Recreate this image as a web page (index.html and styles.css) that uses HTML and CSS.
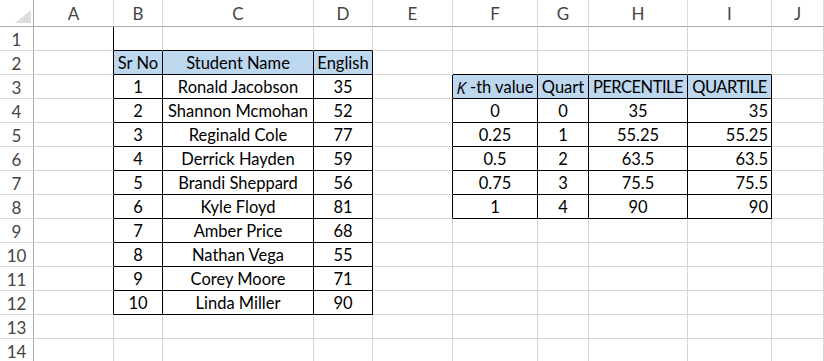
FILE: index.html
```html
<!DOCTYPE html>
<html>
<head>
<meta charset="utf-8">
<link rel="stylesheet" href="styles.css">
</head>
<body>
<div class="sheet">
  <!-- header row -->
  <div class="c corner"><svg width="16" height="13" viewBox="0 0 16 13"><polygon points="16,0 16,13 0,13" fill="#dcdcdc"/></svg></div>
  <div class="c ch">A</div><div class="c ch">B</div><div class="c ch">C</div><div class="c ch">D</div><div class="c ch">E</div><div class="c ch">F</div><div class="c ch">G</div><div class="c ch">H</div><div class="c ch">I</div><div class="c ch">J</div>
  <!-- row 1 -->
  <div class="c rh">1</div><div class="c tl"></div><div class="c tt"></div><div class="c tt"></div><div class="c tt"></div><div class="c"></div><div class="c"></div><div class="c"></div><div class="c"></div><div class="c"></div><div class="c"></div>
  <!-- row 2 -->
  <div class="c rh">2</div><div class="c tl"></div><div class="c t hd">Sr No</div><div class="c t hd">Student Name</div><div class="c t hd">English</div><div class="c"></div><div class="c tt"></div><div class="c tt"></div><div class="c tt"></div><div class="c tt"></div><div class="c"></div>
  <!-- row 3 -->
  <div class="c rh">3</div><div class="c tl"></div><div class="c t">1</div><div class="c t">Ronald Jacobson</div><div class="c t">35</div><div class="c tl"></div><div class="c t hd"><i class="k">K</i>&nbsp;-th value</div><div class="c t hd">Quart</div><div class="c t hd caps">PERCENTILE</div><div class="c t hd caps">QUARTILE</div><div class="c"></div>
  <!-- row 4 -->
  <div class="c rh">4</div><div class="c tl"></div><div class="c t">2</div><div class="c t">Shannon Mcmohan</div><div class="c t">52</div><div class="c tl"></div><div class="c t">0</div><div class="c t">0</div><div class="c t">35</div><div class="c t r">35</div><div class="c"></div>
  <!-- row 5 -->
  <div class="c rh">5</div><div class="c tl"></div><div class="c t">3</div><div class="c t">Reginald Cole</div><div class="c t">77</div><div class="c tl"></div><div class="c t">0.25</div><div class="c t">1</div><div class="c t">55.25</div><div class="c t r">55.25</div><div class="c"></div>
  <!-- row 6 -->
  <div class="c rh">6</div><div class="c tl"></div><div class="c t">4</div><div class="c t">Derrick Hayden</div><div class="c t">59</div><div class="c tl"></div><div class="c t">0.5</div><div class="c t">2</div><div class="c t">63.5</div><div class="c t r">63.5</div><div class="c"></div>
  <!-- row 7 -->
  <div class="c rh">7</div><div class="c tl"></div><div class="c t">5</div><div class="c t">Brandi Sheppard</div><div class="c t">56</div><div class="c tl"></div><div class="c t">0.75</div><div class="c t">3</div><div class="c t">75.5</div><div class="c t r">75.5</div><div class="c"></div>
  <!-- row 8 -->
  <div class="c rh">8</div><div class="c tl"></div><div class="c t">6</div><div class="c t">Kyle Floyd</div><div class="c t">81</div><div class="c tl"></div><div class="c t">1</div><div class="c t">4</div><div class="c t">90</div><div class="c t r">90</div><div class="c"></div>
  <!-- row 9 -->
  <div class="c rh">9</div><div class="c tl"></div><div class="c t">7</div><div class="c t">Amber Price</div><div class="c t">68</div><div class="c"></div><div class="c"></div><div class="c"></div><div class="c"></div><div class="c"></div><div class="c"></div>
  <!-- row 10 -->
  <div class="c rh">10</div><div class="c tl"></div><div class="c t">8</div><div class="c t">Nathan Vega</div><div class="c t">55</div><div class="c"></div><div class="c"></div><div class="c"></div><div class="c"></div><div class="c"></div><div class="c"></div>
  <!-- row 11 -->
  <div class="c rh">11</div><div class="c tl"></div><div class="c t">9</div><div class="c t">Corey Moore</div><div class="c t">71</div><div class="c"></div><div class="c"></div><div class="c"></div><div class="c"></div><div class="c"></div><div class="c"></div>
  <!-- row 12 -->
  <div class="c rh">12</div><div class="c tl"></div><div class="c t">10</div><div class="c t">Linda Miller</div><div class="c t">90</div><div class="c"></div><div class="c"></div><div class="c"></div><div class="c"></div><div class="c"></div><div class="c"></div>
  <!-- row 13 -->
  <div class="c rh">13</div><div class="c"></div><div class="c"></div><div class="c"></div><div class="c"></div><div class="c"></div><div class="c"></div><div class="c"></div><div class="c"></div><div class="c"></div><div class="c"></div>
  <!-- row 14 -->
  <div class="c rh">14</div><div class="c"></div><div class="c"></div><div class="c"></div><div class="c"></div><div class="c"></div><div class="c"></div><div class="c"></div><div class="c"></div><div class="c"></div><div class="c"></div>
</div>
</body>
</html>
```

FILE: styles.css
```css
html, body {
  margin: 0;
  padding: 0;
  background: #ffffff;
  overflow: hidden;
}
.sheet {
  display: grid;
  grid-template-columns: 34px 80px 49px 151px 59px 80px 85px 51px 99px 84px 1fr;
  grid-template-rows: 27px repeat(14, 24px);
  width: 824px;
  font-family: Lato, "Open Sans", sans-serif;
  font-size: 16.5px;
  color: #000;
}
.c {
  box-sizing: border-box;
  border-right: 1px solid #d4d4d4;
  border-bottom: 1px solid #d4d4d4;
  display: flex;
  align-items: center;
  justify-content: center;
  white-space: nowrap;
  overflow: hidden;
  padding-top: 1px;
}
.corner {
  border-right-color: #ababab;
  border-bottom-color: #ababab;
  align-items: flex-end;
  justify-content: flex-end;
  padding: 0 2px 3px 0;
}
.ch {
  color: #444;
  font-size: 17px;
  border-bottom-color: #ababab;
  border-right-color: #dadada;
}
.rh {
  color: #444;
  font-size: 17px;
  border-right-color: #ababab;
  border-bottom-color: #dadada;
}
.t {
  border-right-color: #000;
  border-bottom-color: #000;
}
.tl {
  border-right-color: #000;
}
.tt {
  border-bottom-color: #000;
}
.hd {
  background: #bdd7ee;
}
.caps {
  letter-spacing: -0.5px;
}
.k {
  font-style: italic;
  font-family: "Open Sans", sans-serif;
}
.r {
  justify-content: flex-end;
  padding-right: 3px;
}
```
